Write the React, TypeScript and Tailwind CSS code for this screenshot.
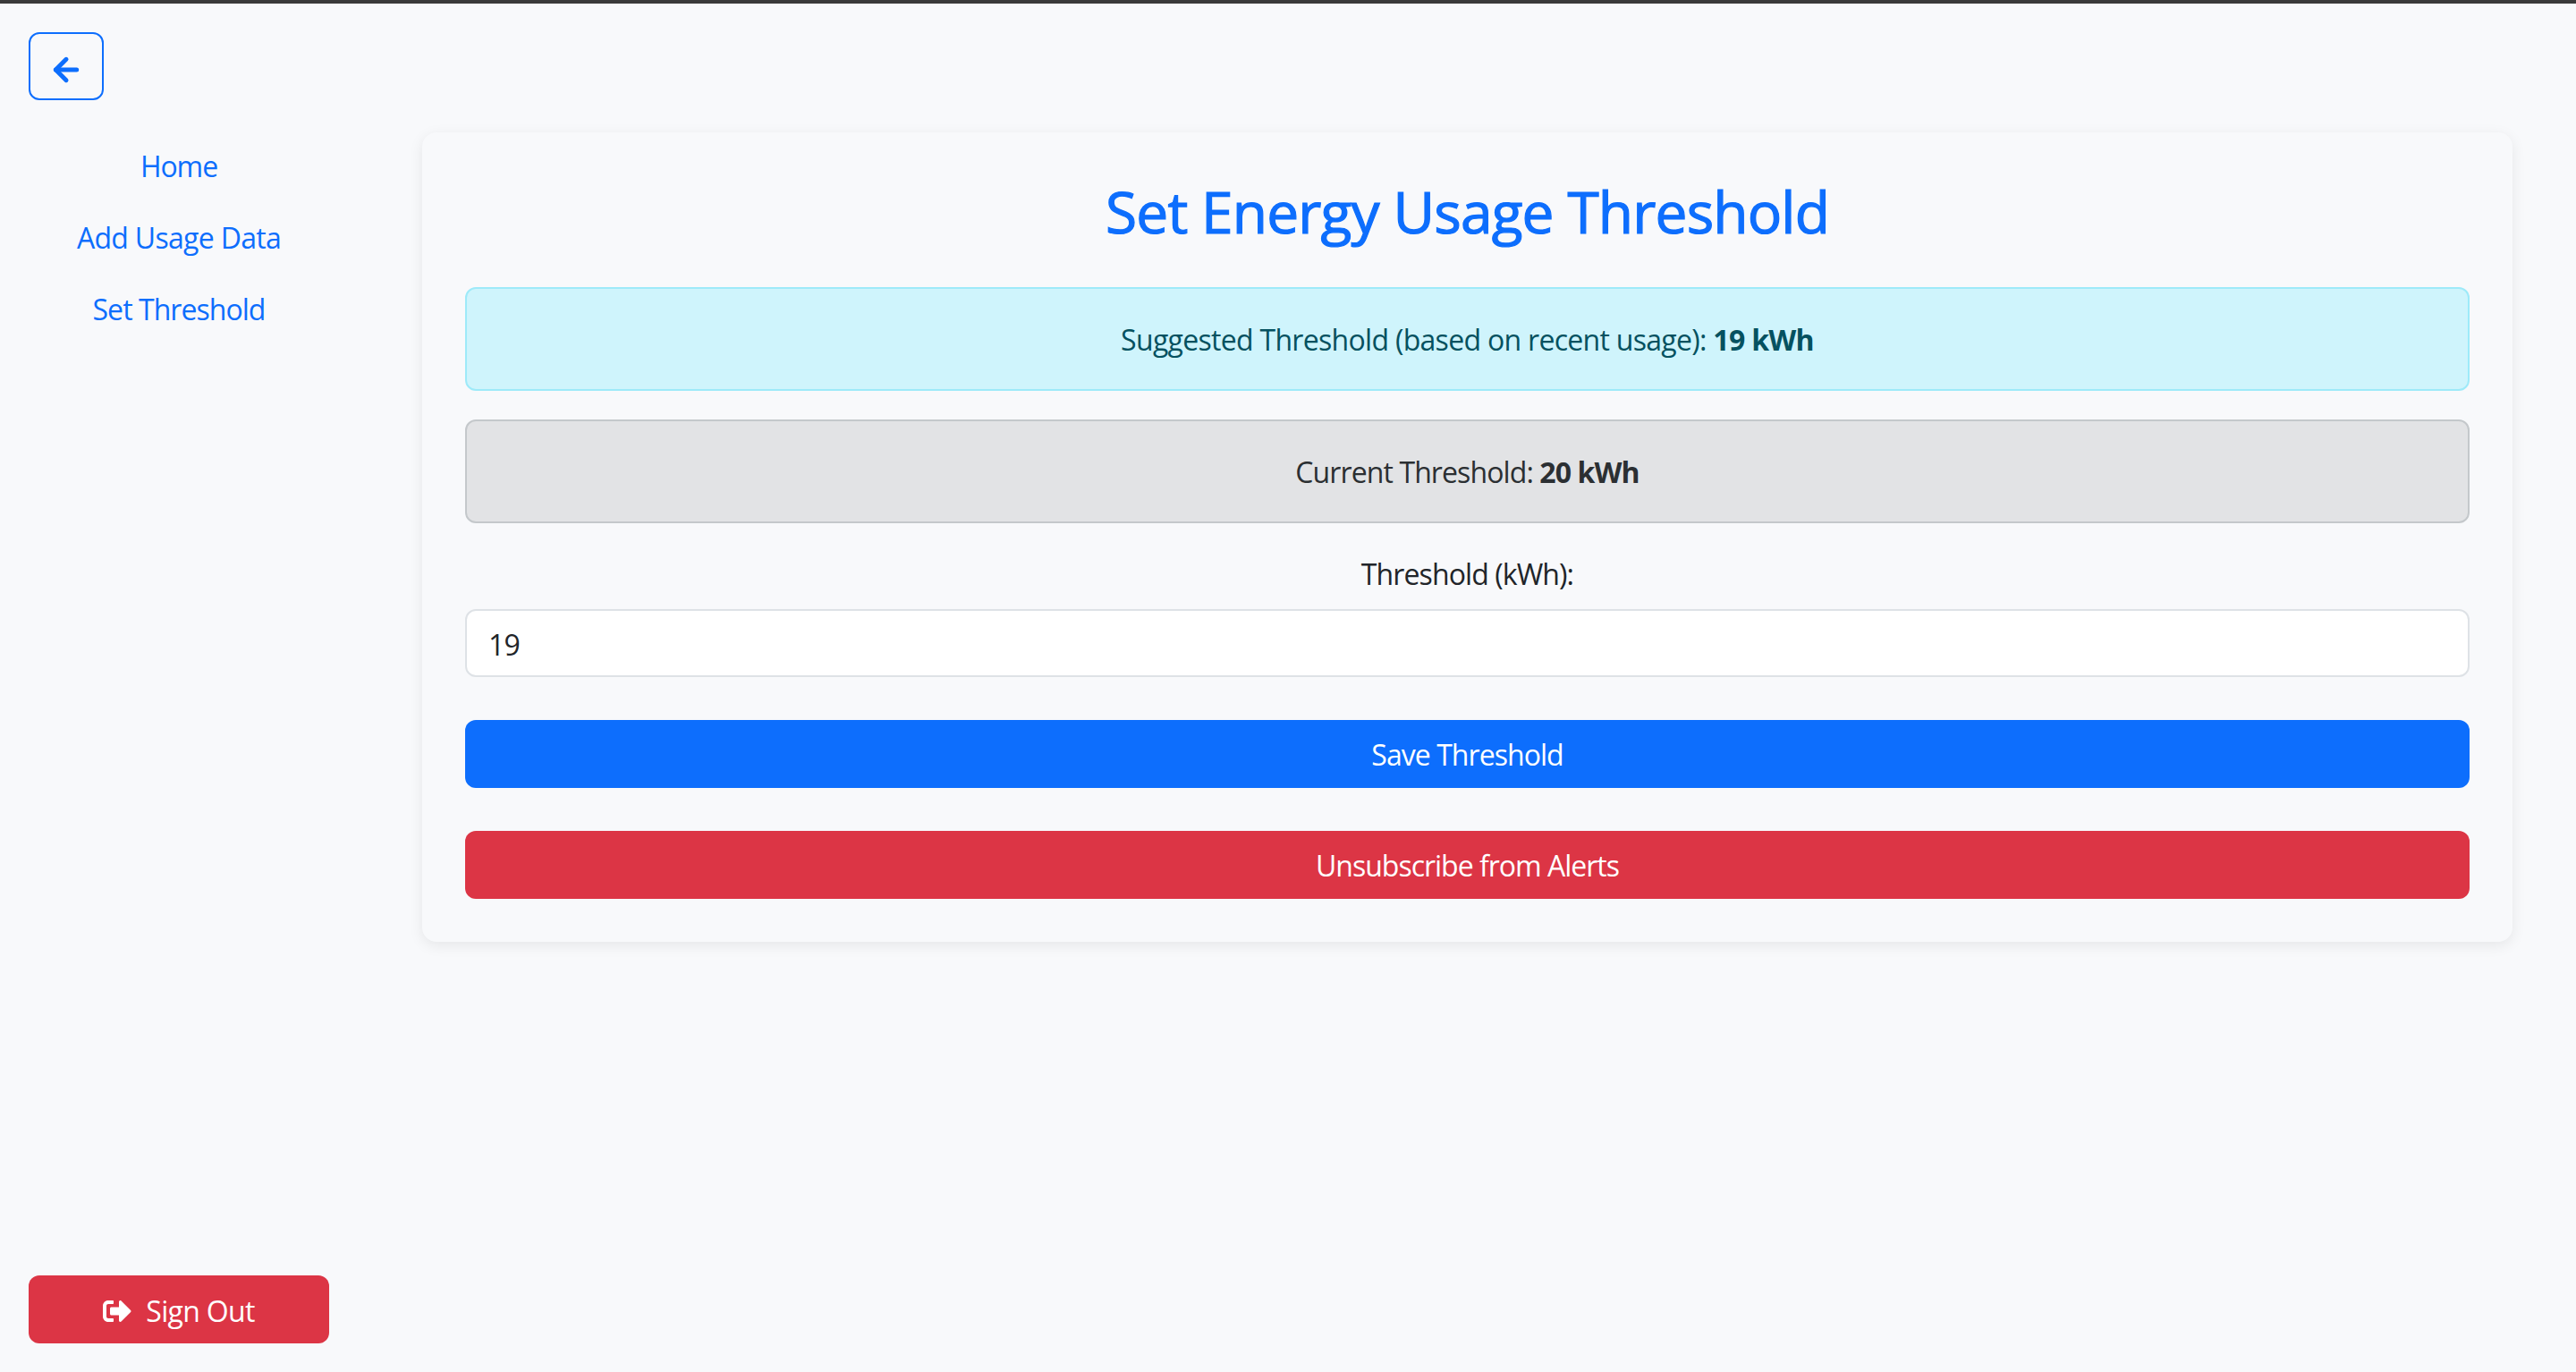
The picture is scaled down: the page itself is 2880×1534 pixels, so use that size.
import React from "react";
import { ArrowLeft } from "lucide-react";
import { FaSignOutAlt } from "react-icons/fa";

const navLinks = [
  { label: "Home", tracking: "tracking-[-1.1px]" },
  { label: "Add Usage Data", tracking: "tracking-[-0.7px]" },
  { label: "Set Threshold", tracking: "tracking-[-0.95px]" },
];

export default function App() {
  return (
    <div className="flex h-screen border-t-[4px] border-[#3a3a3a] bg-[#f8f9fb] font-['Open_Sans','Noto_Sans',sans-serif] text-[32px] leading-[48px] tracking-[-0.9px] text-[#212529]">
      {/* サイドバー */}
      <aside className="flex w-[400px] shrink-0 flex-col px-[32px] pt-[32px] pb-[32px]">
        <button className="flex h-[76px] w-[84px] items-center justify-center rounded-[12px] border-2 border-[#0d6efd] pt-[8px] text-[#0d6efd]">
          <ArrowLeft size={40} strokeWidth={3} />
        </button>
        <nav className="mt-[50px] flex flex-col gap-[32px] text-center">
          {navLinks.map((link) => (
            <a key={link.label} className={`text-[#0d6efd] ${link.tracking}`}>
              {link.label}
            </a>
          ))}
        </nav>
        <button className="mt-auto flex h-[76px] w-full items-center justify-center gap-[16px] rounded-[12px] bg-[#dc3545] pt-[4px] tracking-[-0.7px] text-white">
          <FaSignOutAlt className="size-[32px]" />
          Sign Out
        </button>
      </aside>

      {/* メイン */}
      <main className="flex-1 pt-[144px] pr-[71px] pl-[72px]">
        <div className="flex flex-col rounded-[16px] bg-[#f8f9fb] p-[48px] shadow-[0_4px_16px_rgba(0,0,0,0.08)]">
          <h2 className="mb-[48px] pt-[4px] text-center text-[64px] leading-[73px] font-normal tracking-[-0.85px] text-[#0d6efd] [-webkit-text-stroke:1.2px_#0d6efd]">
            Set Energy Usage Threshold
          </h2>
          <div className="flex h-[116px] items-center justify-center rounded-[12px] border-2 border-[#9eeaf9] bg-[#cff4fc] pt-[2px] tracking-[-0.7px] text-[#055160]">
            <span>
              Suggested Threshold (based on recent usage): <strong className="font-bold">19 kWh</strong>
            </span>
          </div>
          <div className="mt-[32px] flex h-[116px] items-center justify-center rounded-[12px] border-2 border-[#c4c8cb] bg-[#e2e3e5] pt-[2px] text-[#2b2f32]">
            <span>
              Current Threshold: <strong className="font-bold">20 kWh</strong>
            </span>
          </div>
          <label className="mt-[32px] mb-[16px] block pt-[2px] text-center leading-[46px]">Threshold (kWh):</label>
          <input
            type="number"
            defaultValue={19}
            className="h-[76px] w-full rounded-[12px] border-2 border-[#dee2e6] bg-white px-[24px] pt-[2px] text-[#212529] outline-none"
          />
          <button className="mt-[48px] h-[76px] w-full rounded-[12px] bg-[#0d6efd] pt-[2px] tracking-[-0.95px] text-white">
            Save Threshold
          </button>
          <button className="mt-[48px] h-[76px] w-full rounded-[12px] bg-[#dc3545] pt-[2px] tracking-[-1px] text-white">
            Unsubscribe from Alerts
          </button>
        </div>
      </main>
    </div>
  );
}
